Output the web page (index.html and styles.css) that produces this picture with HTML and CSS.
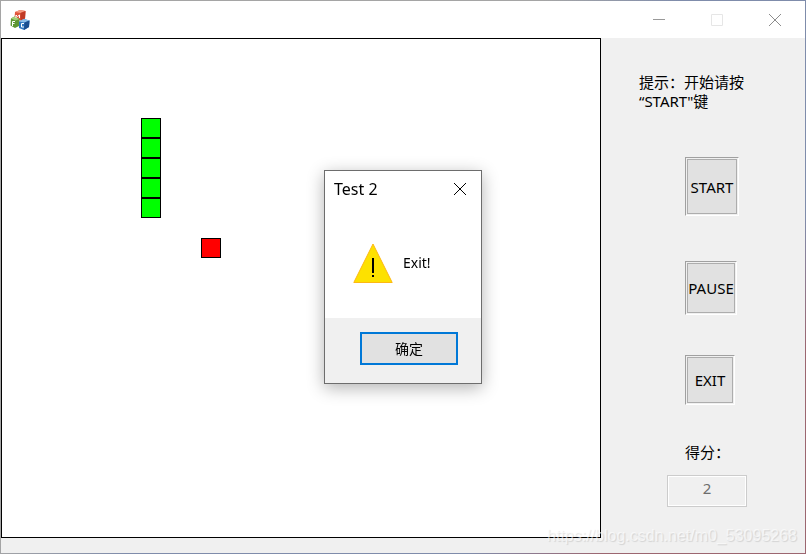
FILE: index.html
```html
<!DOCTYPE html>
<html lang="zh-CN">
<head>
    <meta charset="UTF-8">
    <meta name="viewport" content="width=device-width, initial-scale=1.0">
    <title>Test 2</title>
    <link rel="stylesheet" href="styles.css">
</head>
<body>
    <div class="window">
        <header class="titlebar">
            <svg class="app-icon" width="20" height="20" viewBox="0 0 20 20" aria-hidden="true">
                <path d="M5 2 L10 0 L15.500 1 L15 8.500 L10 10.500 L4.500 8.500 Z" fill="#e0543a"/>
                <path d="M5 2 L10 0 L15.500 1 L10.500 3 Z" fill="#f59a80"/>
                <path d="M10.500 3 L15.500 1 L15 8.500 L10.500 10.500 Z" fill="#c03a26"/>
                <path d="M1 8.500 L4.500 6.500 L9.500 9 L9 16 L5 18 L0.500 15.500 Z" fill="#5d9632"/>
                <path d="M1 8.500 L4.500 6.500 L9.500 9 L5.500 10.500 Z" fill="#a4cf78"/>
                <path d="M9 11.500 L14 9 L19.500 10.500 L19 17 L14 20 L9 18 Z" fill="#2f78c0"/>
                <path d="M9 11.500 L14 9 L19.500 10.500 L14.500 12.500 Z" fill="#8dc0ea"/>
                <path d="M14.500 12.500 L19.500 10.500 L19 17 L14 20 Z" fill="#1a4f90"/>
                <path d="M6 8 V5 L7.500 6.500 L9.500 5 V8" fill="none" stroke="#fff"/>
                <path d="M5 11.500 H2.500 V16 M2.500 13.500 H4.500" fill="none" stroke="#fff"/>
                <path d="M14 13.500 H11.500 V17 H14" fill="none" stroke="#fff"/>
            </svg>
            <div class="window-controls">
                <button class="window-button" aria-label="Minimize">
                    <svg width="14" height="14" viewBox="0 0 14 14"><path d="M1 6.500 H13" stroke="#999"/></svg>
                </button>
                <button class="window-button" aria-label="Maximize" disabled>
                    <svg width="14" height="14" viewBox="0 0 14 14"><path d="M1.500 1.500 H12.500 V12.500 H1.500 Z" fill="none" stroke="#e6e6e6"/></svg>
                </button>
                <button class="window-button" aria-label="Close">
                    <svg width="14" height="14" viewBox="0 0 14 14"><path d="M1 1 L13 13 M13 1 L1 13" stroke="#8c8c8c"/></svg>
                </button>
            </div>
        </header>

        <main class="client">
            <div class="board">
                <div class="cell snake row-5"></div>
                <div class="cell snake row-6"></div>
                <div class="cell snake row-7"></div>
                <div class="cell snake row-8"></div>
                <div class="cell snake row-9"></div>
                <div class="cell food"></div>
            </div>
            <aside class="panel">
                <p class="hint">提示：开始请按<br>“START"键</p>
                <button class="game-button start">START</button>
                <button class="game-button pause">PAUSE</button>
                <button class="game-button exit">EXIT</button>
                <label class="score-label" for="score">得分：</label>
                <input class="score" id="score" type="text" value="2" disabled>
            </aside>
        </main>
    </div>

    <div class="dialog" role="alertdialog" aria-labelledby="dialog-title" aria-describedby="dialog-text">
        <div class="dialog-header">
            <span id="dialog-title">Test 2</span>
            <button class="dialog-close" aria-label="Close">
                <svg width="14" height="14" viewBox="0 0 14 14"><path d="M1 1 L13 13 M13 1 L1 13" stroke="#000"/></svg>
            </button>
        </div>
        <div class="dialog-body">
            <svg width="40" height="40" viewBox="0 0 40 40" aria-hidden="true">
                <path d="M20 1 L39.200 39.500 H0.800 Z" fill="#fde100" stroke="#fdb813"/>
                <path d="M19 15 H21 V30 H19 Z M19 32 H21 V34 H19 Z" fill="#000"/>
            </svg>
            <span id="dialog-text">Exit!</span>
        </div>
        <div class="dialog-footer">
            <button class="ok-button">确定</button>
        </div>
    </div>

    <div class="watermark">https://blog.csdn.net/m0_53095268</div>
</body>
</html>
```
FILE: styles.css
```css
* {
    box-sizing: border-box;
}

body {
    margin: 0;
    padding: 1px;
    min-height: 100vh;
    display: flex;
    background: linear-gradient(135deg, #a5a5a5 0%, #a5a5a5 40%, #7f8cab 50%, #7f8cab 75%, #9c6670 85%);
    font-family: "Noto Sans", "Noto Sans CJK SC", sans-serif;
    font-size: 14px;
    line-height: 18px;
    color: #000;
}

button {
    padding: 0;
    font: inherit;
    color: inherit;
}

.window {
    flex: 1;
    display: flex;
    flex-direction: column;
    background: #f0f0f0;
}

/* title bar */
.titlebar {
    display: flex;
    align-items: center;
    justify-content: space-between;
    height: 37px;
    padding: 0 1px 0 9px;
    background: #fff;
}

.window-controls {
    display: flex;
    height: 100%;
}

.window-button {
    width: 58px;
    display: flex;
    align-items: center;
    justify-content: center;
    border: none;
    background: none;
}

/* game area */
.client {
    flex: 1;
    display: flex;
    align-items: flex-start;
}

.board {
    flex: 1;
    display: grid;
    grid-template-columns: repeat(30, 20px);
    grid-template-rows: repeat(25, 20px);
    background: #fff;
    box-shadow: inset 0 0 0 1px #000;
}

.cell {
    border: 1px solid #000;
}

.snake {
    grid-column: 8;
    background: #0f0;
}

.row-5 { grid-row: 5; }
.row-6 { grid-row: 6; }
.row-7 { grid-row: 7; }
.row-8 { grid-row: 8; }
.row-9 { grid-row: 9; }

.food {
    grid-column: 11;
    grid-row: 11;
    background: #f00;
}

/* side panel */
.panel {
    width: 204px;
    display: flex;
    flex-direction: column;
    align-items: flex-start;
    padding: 35px 0 0 84px;
}

.hint {
    margin: 0 0 46px -46px;
    font-size: 15px;
    line-height: 19px;
    white-space: nowrap;
}

.game-button {
    border: 1px solid;
    border-color: #a0a0a0 #fff #fff #a0a0a0;
    background: #e1e1e1;
    outline: 1px solid #adadad;
    outline-offset: -3px;
    box-shadow: inset 0 0 0 1px #f0f0f0;
    font-size: 15px;
}

.start {
    width: 54px;
    height: 59px;
    margin-bottom: 45px;
}

.pause {
    width: 52px;
    height: 54px;
    margin-bottom: 40px;
}

.exit {
    width: 50px;
    height: 50px;
    margin-bottom: 38px;
}

.score-label {
    margin-bottom: 14px;
    font-size: 15px;
}

.score {
    width: 80px;
    height: 32px;
    margin-left: -18px;
    padding: 0 0 6px;
    border: 1px solid #ccc;
    background: #f0f0f0;
    box-shadow: inset 0 0 0 1px #fff;
    font: inherit;
    font-size: 15px;
    text-align: center;
    color: #6d6d6d;
}

/* message box */
.dialog {
    position: fixed;
    inset: 0;
    width: 158px;
    height: fit-content;
    margin: auto;
    border: 1px solid #6d6d6d;
    background: #fff;
    box-shadow: 0 4px 16px rgba(0, 0, 0, 0.3);
}

.dialog-header {
    display: flex;
    align-items: center;
    justify-content: space-between;
    height: 36px;
    padding: 0 14px 0 9px;
    font-size: 16px;
}

.dialog-close {
    display: flex;
    border: none;
    background: none;
}

.dialog-body {
    display: flex;
    align-items: center;
    gap: 10px;
    height: 111px;
    padding: 1px 0 0 28px;
}

.dialog-footer {
    display: flex;
    justify-content: flex-end;
    padding: 14px 23px 18px;
    background: #f0f0f0;
}

.ok-button {
    width: 98px;
    height: 33px;
    border: 2px solid #0078d7;
    background: #e1e1e1;
}

.watermark {
    position: absolute;
    right: 9px;
    bottom: 9px;
    font-family: "Liberation Sans", sans-serif;
    font-size: 16px;
    color: rgba(255, 255, 255, 0.6);
    text-shadow: 1px 1px 1px rgba(0, 0, 0, 0.12);
}
```
